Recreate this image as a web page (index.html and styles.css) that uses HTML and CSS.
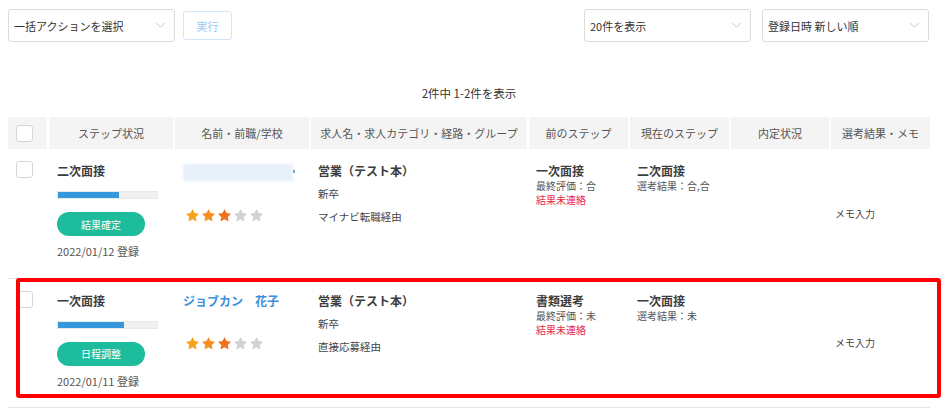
FILE: index.html
```html
<!doctype html>
<html lang="ja">
    <head>
        <meta charset="utf-8">
        <meta name="viewport" content="width=device-width, initial-scale=1">
        <title>応募者一覧</title>
        <link rel="stylesheet" href="styles.css">
    </head>
    <body>
        <div id="wrapper">
            <div class="toolbar">
                <div class="toolbar-left">
                    <div class="select">
                        <span>一括アクションを選択</span>
                        <svg class="chevron" viewBox="0 0 12 8" width="11" height="7"><path d="M1 1l5 5 5-5" fill="none" stroke="#bbb" stroke-width="1"/></svg>
                    </div>
                    <button class="run">実行</button>
                </div>
                <div class="toolbar-right">
                    <div class="select">
                        <span>20件を表示</span>
                        <svg class="chevron" viewBox="0 0 12 8" width="11" height="7"><path d="M1 1l5 5 5-5" fill="none" stroke="#bbb" stroke-width="1"/></svg>
                    </div>
                    <div class="select">
                        <span>登録日時 新しい順</span>
                        <svg class="chevron" viewBox="0 0 12 8" width="11" height="7"><path d="M1 1l5 5 5-5" fill="none" stroke="#bbb" stroke-width="1"/></svg>
                    </div>
                </div>
            </div>

            <p class="count">2件中 1-2件を表示</p>

            <div class="table-wrap">
                <table>
                    <colgroup>
                        <col style="width:40px">
                        <col style="width:126px">
                        <col style="width:136px">
                        <col style="width:218px">
                        <col style="width:101px">
                        <col style="width:101px">
                        <col style="width:100px">
                        <col style="width:100px">
                    </colgroup>
                    <thead>
                        <tr>
                            <th class="check"><span class="box"></span></th>
                            <th>ステップ状況</th>
                            <th>名前・前職/学校</th>
                            <th>求人名・求人カテゴリ・経路・グループ</th>
                            <th>前のステップ</th>
                            <th>現在のステップ</th>
                            <th>内定状況</th>
                            <th>選考結果・メモ</th>
                        </tr>
                    </thead>
                    <tbody>
                        <tr>
                            <td class="check"><span class="box"></span></td>
                            <td>
                                <div class="title">二次面接</div>
                                <div class="progress"><div class="fill" style="width:62%"></div></div>
                                <span class="pill">結果確定</span>
                                <div class="date">2022/01/12 登録</div>
                            </td>
                            <td>
                                <div class="name-blur"><span class="blur"></span><span class="dot"></span></div>
                                <div class="stars">
                                    <svg viewBox="0 0 24 24"><path class="s1" d="M12 1.5l3.2 6.6 7.3 1-5.3 5.1 1.3 7.2L12 18l-6.5 3.4 1.3-7.2L1.5 9.1l7.3-1z"/></svg>
                                    <svg viewBox="0 0 24 24"><path class="s2" d="M12 1.5l3.2 6.6 7.3 1-5.3 5.1 1.3 7.2L12 18l-6.5 3.4 1.3-7.2L1.5 9.1l7.3-1z"/></svg>
                                    <svg viewBox="0 0 24 24"><path class="s3" d="M12 1.5l3.2 6.6 7.3 1-5.3 5.1 1.3 7.2L12 18l-6.5 3.4 1.3-7.2L1.5 9.1l7.3-1z"/></svg>
                                    <svg viewBox="0 0 24 24"><path class="off" d="M12 1.5l3.2 6.6 7.3 1-5.3 5.1 1.3 7.2L12 18l-6.5 3.4 1.3-7.2L1.5 9.1l7.3-1z"/></svg>
                                    <svg viewBox="0 0 24 24"><path class="off" d="M12 1.5l3.2 6.6 7.3 1-5.3 5.1 1.3 7.2L12 18l-6.5 3.4 1.3-7.2L1.5 9.1l7.3-1z"/></svg>
                                </div>
                            </td>
                            <td>
                                <div class="title">営業（テスト本）</div>
                                <div class="job-line">新卒</div>
                                <div class="job-line">マイナビ転職経由</div>
                            </td>
                            <td>
                                <div class="title">一次面接</div>
                                <div class="small">最終評価：合</div>
                                <div class="small red">結果未連絡</div>
                            </td>
                            <td>
                                <div class="title">二次面接</div>
                                <div class="small">選考結果：合,合</div>
                            </td>
                            <td></td>
                            <td class="memo">メモ入力</td>
                        </tr>
                        <tr>
                            <td class="check"><span class="box"></span></td>
                            <td>
                                <div class="title">一次面接</div>
                                <div class="progress"><div class="fill" style="width:67%"></div></div>
                                <span class="pill">日程調整</span>
                                <div class="date">2022/01/11 登録</div>
                            </td>
                            <td>
                                <div class="title name">ジョブカン　花子</div>
                                <div class="stars">
                                    <svg viewBox="0 0 24 24"><path class="s1" d="M12 1.5l3.2 6.6 7.3 1-5.3 5.1 1.3 7.2L12 18l-6.5 3.4 1.3-7.2L1.5 9.1l7.3-1z"/></svg>
                                    <svg viewBox="0 0 24 24"><path class="s2" d="M12 1.5l3.2 6.6 7.3 1-5.3 5.1 1.3 7.2L12 18l-6.5 3.4 1.3-7.2L1.5 9.1l7.3-1z"/></svg>
                                    <svg viewBox="0 0 24 24"><path class="s3" d="M12 1.5l3.2 6.6 7.3 1-5.3 5.1 1.3 7.2L12 18l-6.5 3.4 1.3-7.2L1.5 9.1l7.3-1z"/></svg>
                                    <svg viewBox="0 0 24 24"><path class="off" d="M12 1.5l3.2 6.6 7.3 1-5.3 5.1 1.3 7.2L12 18l-6.5 3.4 1.3-7.2L1.5 9.1l7.3-1z"/></svg>
                                    <svg viewBox="0 0 24 24"><path class="off" d="M12 1.5l3.2 6.6 7.3 1-5.3 5.1 1.3 7.2L12 18l-6.5 3.4 1.3-7.2L1.5 9.1l7.3-1z"/></svg>
                                </div>
                            </td>
                            <td>
                                <div class="title">営業（テスト本）</div>
                                <div class="job-line">新卒</div>
                                <div class="job-line">直接応募経由</div>
                            </td>
                            <td>
                                <div class="title">書類選考</div>
                                <div class="small">最終評価：未</div>
                                <div class="small red">結果未連絡</div>
                            </td>
                            <td>
                                <div class="title">一次面接</div>
                                <div class="small">選考結果：未</div>
                            </td>
                            <td></td>
                            <td class="memo">メモ入力</td>
                        </tr>
                    </tbody>
                </table>
                <!-- annotation box over the second row -->
                <div class="highlight"></div>
            </div>
        </div>
    </body>
</html>
```

FILE: styles.css
```css
* {
    margin: 0;
    padding: 0;
    box-sizing: border-box;
    font-family: 'Noto Sans CJK JP', 'Noto Sans', sans-serif;
}

body {
    background: #fff;
    color: #444;
    font-size: 12px;
}

#wrapper {
    width: 949px;
    padding: 9px 0 0 8px;
}

.toolbar {
    display: flex;
    justify-content: space-between;
    width: 921px;
}

.toolbar-left,
.toolbar-right {
    display: flex;
    align-items: center;
    gap: 8px;
}

.toolbar-right {
    gap: 11px;
}

.select {
    width: 167px;
    height: 33px;
    border: 1px solid #dcdcdc;
    border-radius: 3px;
    display: flex;
    align-items: center;
    justify-content: space-between;
    padding: 0 8px 0 5px;
    font-size: 11px;
    color: #333;
}

.chevron {
    display: block;
}

.run {
    width: 49px;
    height: 29px;
    border: 1px solid #d3e6f7;
    border-radius: 3px;
    background: #fff;
    color: #9cc8ee;
    font-size: 11px;
}

.count {
    width: 922px;
    text-align: center;
    font-size: 11.5px;
    color: #333;
    margin-top: 42px;
    line-height: 18px;
    margin-bottom: 15px;
}

.table-wrap {
    position: relative;
    width: 922px;
}

table {
    width: 922px;
    border-collapse: collapse;
    table-layout: fixed;
}

th {
    height: 32px;
    background: #f4f4f4;
    border-right: 2px solid #fff;
    font-weight: 400;
    font-size: 11px;
    color: #555;
    text-align: center;
    vertical-align: middle;
}

th:last-child {
    border-right: 0;
}

th.check,
td.check {
    text-align: left;
    padding-left: 8px;
}

.box {
    display: block;
    width: 17px;
    height: 17px;
    border: 1px solid #d6d6d6;
    border-radius: 3px;
    background: #fff;
}

tbody tr {
    height: 129px;
    border-bottom: 1px solid #e6e6e6;
}

td {
    vertical-align: top;
    padding: 13px 8px 0 8px;
}

td.check {
    padding-top: 12px;
}

td:nth-child(2),
td:nth-child(3) {
    padding-left: 9px;
}

.title {
    font-size: 12px;
    font-weight: 700;
    color: #3d3d3d;
    line-height: 17px;
}

.name {
    color: #3b8fd9;
}

.progress {
    width: 101px;
    height: 8px;
    margin-top: 12px;
    background: #f0f0f0;
    border: 1px solid #e8e8e8;
    overflow: hidden;
}

.fill {
    height: 100%;
    background: #3498db;
}

.pill {
    display: flex;
    align-items: center;
    justify-content: center;
    width: 88px;
    height: 24px;
    margin-top: 13px;
    border-radius: 12px;
    background: #1dbc9c;
    color: #fff;
    font-size: 10px;
}

.date {
    margin-top: 8px;
    font-size: 11px;
    color: #555;
    line-height: 15px;
}

.name-blur {
    position: relative;
    width: 112px;
    height: 17px;
    margin-top: 2px;
}

.blur {
    display: block;
    width: 110px;
    height: 17px;
    background: #e8f0fa;
    filter: blur(1.5px);
}

.dot {
    position: absolute;
    right: 0;
    top: 6px;
    width: 2px;
    height: 3px;
    background: #6aa6e0;
}

.stars {
    display: flex;
    gap: 1px;
    margin-top: 27px;
    padding-left: 2px;
}

.stars svg {
    width: 15px;
    height: 15px;
    display: block;
}

.s1 { fill: #f8a31c; }
.s2 { fill: #f68f1e; }
.s3 { fill: #f2711f; }
.off { fill: #d2d2d2; }

.job-line {
    font-size: 10.5px;
    color: #444;
    margin-top: 6px;
    line-height: 17px;
}

.small {
    font-size: 10px;
    color: #555;
    line-height: 14px;
}

.red {
    color: #e8264a;
}

td.memo {
    vertical-align: middle;
    padding: 0 5px;
    font-size: 10px;
    color: #444;
}

.highlight {
    position: absolute;
    left: 8px;
    top: 161px;
    width: 925px;
    height: 120px;
    border: 4px solid #ff0000;
    border-radius: 3px;
    pointer-events: none;
}
```
